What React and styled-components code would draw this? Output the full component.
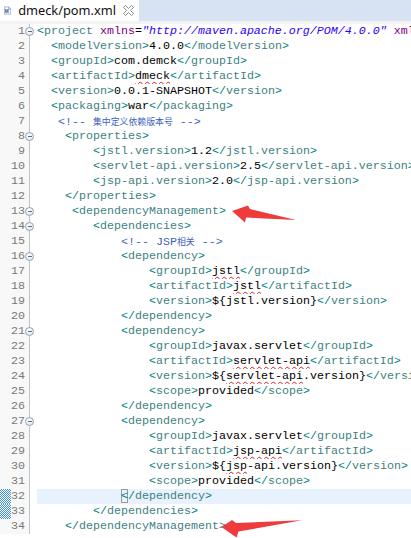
import React from "react";
import styled, { createGlobalStyle, css } from "styled-components";

const Global = createGlobalStyle`
  html, body { margin: 0; padding: 0; background: #ffffff; overflow: hidden; }
  #root { width: 411px; height: 538px; }
`;

const Window = styled.div`
  position: relative;
  width: 411px;
  height: 538px;
  display: flex;
  flex-direction: column;
  background: #ffffff;
  overflow: hidden;
`;

const TabBar = styled.div`
  height: 21px;
  display: flex;
  align-items: stretch;
  background: #d7e3f2;
  flex-shrink: 0;
`;

const Tab = styled.div`
  width: 139px;
  display: flex;
  align-items: center;
  gap: 7px;
  padding-left: 4px;
  box-sizing: border-box;
  background: #ffffff;
  font-family: "Noto Sans", "Liberation Sans", sans-serif;
  font-size: 12.8px;
  color: #111;
`;

const TabTitle = styled.span`
  flex: 1;
  line-height: 21px;
`;

const CloseBtn = styled.span`
  display: flex;
  align-items: center;
  margin-right: 5px;
`;

const Band = styled.div`
  height: 3px;
  background: #f3f3f3;
  flex-shrink: 0;
`;

const Editor = styled.div`
  display: flex;
  flex-direction: column;
  font-family: "Liberation Mono", "DejaVu Sans Mono", monospace;
  font-size: 11.67px;
`;

const Row = styled.div`
  display: flex;
  height: 15px;
  line-height: 15px;
`;

const Gutter = styled.div`
  display: flex;
  width: 30px;
  flex-shrink: 0;
  background: #f8f8f8;
`;

const Overview = styled.div`
  width: 11px;
  ${(p) =>
    p.$marked &&
    css`
      background-color: #ffffff;
      background-image: repeating-conic-gradient(#3f8fe6 0 25%, #ffffff 0 50%);
      background-size: 2px 2px;
    `}
`;

const LineNo = styled.div`
  width: 14px;
  text-align: right;
  color: #787878;
`;

const FoldSlot = styled.div`
  position: relative;
  width: 4px;
  border-right: 1px solid #c3c3c3;
`;

const FoldMarker = styled.span`
  position: absolute;
  left: 0px;
  top: 3px;
  width: 9px;
  height: 9px;
  box-sizing: border-box;
  border-radius: 50%;
  border: 1px solid #93a3b6;
  background: radial-gradient(circle at 40% 35%, #ffffff, #d9e2ec);
  &::after {
    content: "";
    position: absolute;
    left: 1.5px;
    top: 3px;
    width: 4px;
    height: 1px;
    background: #5a6d84;
  }
`;

const Code = styled.div`
  flex: 1;
  margin-left: 7px;
  white-space: pre;
  overflow: hidden;
  padding-left: ${(p) => p.$indent * 7}px;
  background: ${(p) => (p.$current ? "#e8f2fe" : "transparent")};
`;

const Bracket = styled.span`
  color: #008080;
  ${(p) =>
    p.$matched &&
    css`
      display: inline-block;
      height: 14px;
      line-height: 15px;
      vertical-align: top;
      box-shadow: inset 0 0 0 1px #9a9a9a;
    `}
`;
const TagName = styled.span`
  color: #3f7f7f;
`;
const Text = styled.span`
  color: #000000;
  ${(p) =>
    p.$squiggle &&
    css`
      text-decoration: underline wavy #e02020;
      text-decoration-thickness: 1px;
      text-underline-offset: 2px;
    `}
`;
const AttrName = styled.span`
  color: #7f007f;
`;
const AttrValue = styled.span`
  color: #2a00ff;
  font-style: italic;
`;
const Comment = styled.span`
  color: #3f5fbf;
`;
const CommentCJK = styled.span`
  color: #3f5fbf;
  font-family: "Noto Sans CJK SC", "Noto Sans", sans-serif;
  font-size: 8.9px;
`;

const Overlay = styled.svg`
  position: absolute;
  left: 0;
  top: 0;
  pointer-events: none;
`;

/* token helpers */
const b = (s, matched) => ({ k: "b", s, matched });
const t = (s) => ({ k: "t", s });
const x = (s) => ({ k: "x", s });
const sq = (s) => ({ k: "sq", s });
const a = (s) => ({ k: "a", s });
const v = (s) => ({ k: "v", s });
const c = (s) => ({ k: "c", s });
const cj = (s) => ({ k: "cj", s });

const content = (val) => (typeof val === "string" ? [x(val)] : val);
const el = (name, val) => [b("<"), t(name), b(">"), ...content(val), b("</"), t(name), b(">")];
const open = (name) => [b("<"), t(name), b(">")];
const close = (name, matched) => [b("<", matched), b("/"), t(name), b(">")];

const lines = [
  { ind: 0, fold: true, toks: [b("<"), t("project"), x(" "), a("xmlns"), x("="), v('"http://maven.apache.org/POM/4.0.0"'), x(" "), a("xmlns:xsi")] },
  { ind: 2, toks: el("modelVersion", "4.0.0") },
  { ind: 2, toks: el("groupId", "com.demck") },
  { ind: 2, toks: el("artifactId", [sq("dmeck")]) },
  { ind: 2, toks: el("version", "0.0.1-SNAPSHOT") },
  { ind: 2, toks: el("packaging", "war") },
  { ind: 3, toks: [c("<!-- "), cj("集中定义依赖版本号"), c(" -->")] },
  { ind: 4, fold: true, toks: open("properties") },
  { ind: 8, toks: el("jstl.version", "1.2") },
  { ind: 8, toks: el("servlet-api.version", "2.5") },
  { ind: 8, toks: el("jsp-api.version", "2.0") },
  { ind: 4, toks: close("properties") },
  { ind: 5, fold: true, toks: open("dependencyManagement") },
  { ind: 8, fold: true, toks: open("dependencies") },
  { ind: 12, toks: [c("<!-- JSP"), cj("相关"), c(" -->")] },
  { ind: 12, fold: true, toks: open("dependency") },
  { ind: 16, toks: el("groupId", [sq("jstl")]) },
  { ind: 16, toks: el("artifactId", [sq("jstl")]) },
  { ind: 16, toks: el("version", "${jstl.version}") },
  { ind: 12, toks: close("dependency") },
  { ind: 12, fold: true, toks: open("dependency") },
  { ind: 16, toks: el("groupId", "javax.servlet") },
  { ind: 16, toks: el("artifactId", [sq("servlet-api")]) },
  { ind: 16, toks: el("version", [x("${"), sq("servlet-api"), x(".version}")]) },
  { ind: 16, toks: el("scope", "provided") },
  { ind: 12, toks: close("dependency") },
  { ind: 12, fold: true, toks: open("dependency") },
  { ind: 16, toks: el("groupId", "javax.servlet") },
  { ind: 16, toks: el("artifactId", [sq("jsp-api")]) },
  { ind: 16, toks: el("version", [x("${"), sq("jsp"), x("-api.version}")]) },
  { ind: 16, toks: el("scope", "provided") },
  { ind: 12, current: true, toks: close("dependency", true) },
  { ind: 8, marked: true, toks: close("dependencies") },
  { ind: 4, toks: close("dependencyManagement") },
];

function Token({ tok }) {
  switch (tok.k) {
    case "b":
      return <Bracket $matched={tok.matched}>{tok.s}</Bracket>;
    case "t":
      return <TagName>{tok.s}</TagName>;
    case "sq":
      return <Text $squiggle>{tok.s}</Text>;
    case "a":
      return <AttrName>{tok.s}</AttrName>;
    case "v":
      return <AttrValue>{tok.s}</AttrValue>;
    case "c":
      return <Comment>{tok.s}</Comment>;
    case "cj":
      return <CommentCJK>{tok.s}</CommentCJK>;
    default:
      return <Text>{tok.s}</Text>;
  }
}

function PomIcon() {
  return (
    <svg width="12" height="13" viewBox="0 0 12 13">
      <path d="M0.5 0.5 H8 L11.5 4 V12.5 H0.5 Z" fill="#ffffff" stroke="#6b84a8" />
      <path d="M8 0.5 V4 H11.5" fill="#dfe7f2" stroke="#6b84a8" />
      <text x="1.2" y="11.3" fontFamily="Liberation Sans, sans-serif" fontWeight="bold" fontSize="8" fill="#1f4f96">
        M
      </text>
    </svg>
  );
}

function CloseIcon() {
  return (
    <svg width="11" height="11" viewBox="0 0 11 11">
      <polygon
        points="0.5,2.5 2.5,0.5 5.5,3.5 8.5,0.5 10.5,2.5 7.5,5.5 10.5,8.5 8.5,10.5 5.5,7.5 2.5,10.5 0.5,8.5 3.5,5.5"
        fill="#ffffff"
        stroke="#8c8c8c"
        strokeWidth="1"
      />
    </svg>
  );
}

export default function App() {
  return (
    <>
      <Global />
      <Window>
        <TabBar>
          <Tab>
            <PomIcon />
            <TabTitle>dmeck/pom.xml</TabTitle>
            <CloseBtn>
              <CloseIcon />
            </CloseBtn>
          </Tab>
        </TabBar>
        <Band />
        <Editor>
          {lines.map((ln, i) => (
            <Row key={i}>
              <Gutter>
                <Overview $marked={ln.current || ln.marked} />
                <LineNo>{i + 1}</LineNo>
                <FoldSlot>{ln.fold && <FoldMarker />}</FoldSlot>
              </Gutter>
              <Code $indent={ln.ind} $current={ln.current}>
                {ln.toks.map((tok, j) => (
                  <Token key={j} tok={tok} />
                ))}
              </Code>
            </Row>
          ))}
        </Editor>
        <Overlay width="411" height="538" viewBox="0 0 411 538">
          <polygon points="232,211 248,205.5 250,209 296,220 246,217.5 245,222.5" fill="#ef3b3b" />
          <polygon points="221.5,527 232,520 236,523 302,520.3 238.5,531.5 236.5,537.5" fill="#ef3b3b" />
        </Overlay>
      </Window>
    </>
  );
}
